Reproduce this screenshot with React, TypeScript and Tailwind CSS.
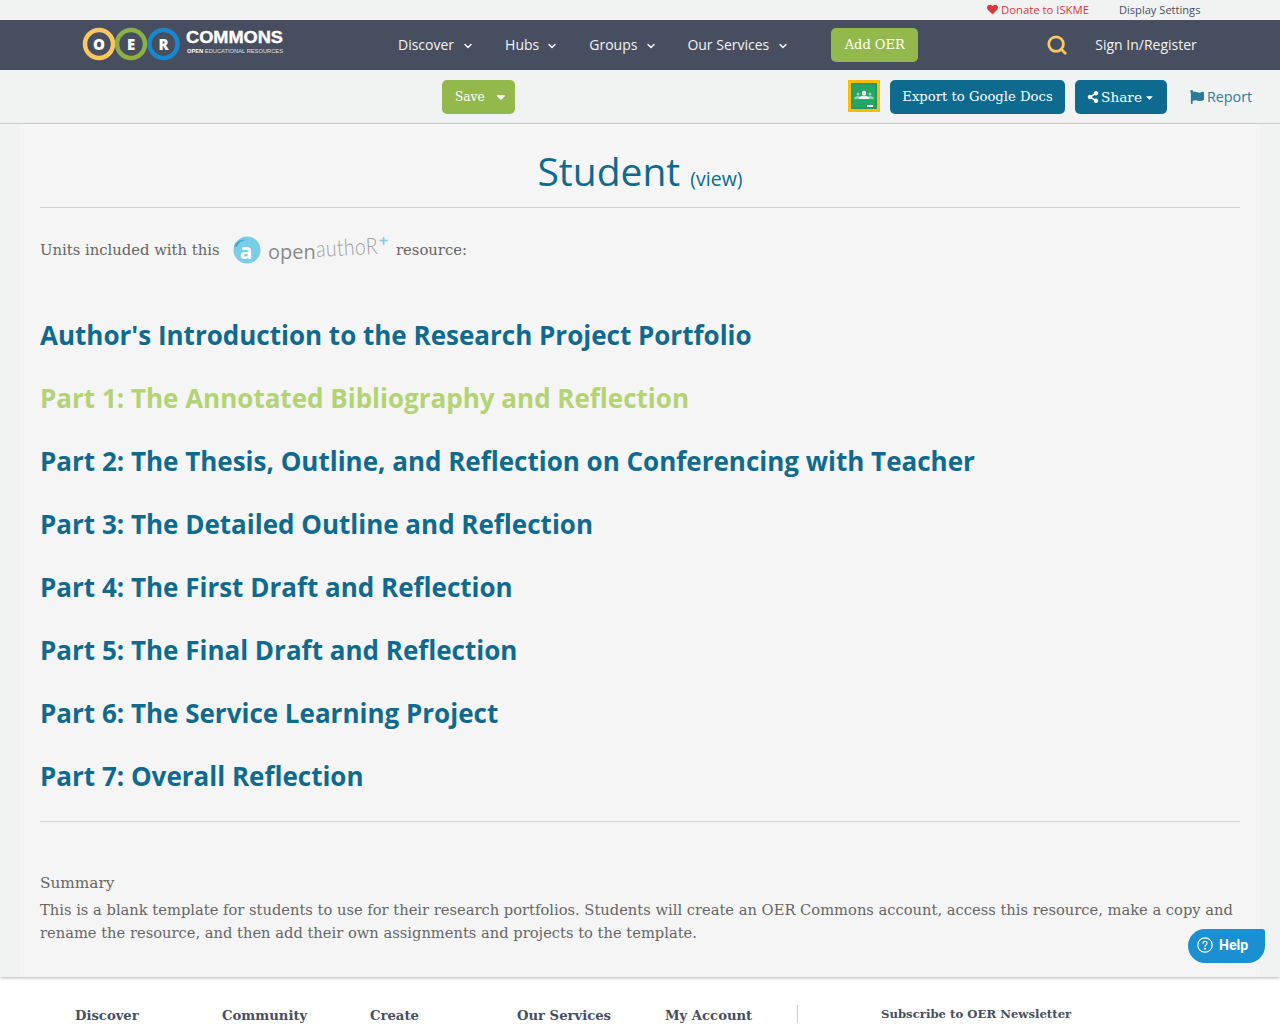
import React from "react";
import { ChevronDown, Search } from "lucide-react";
import { FaHeart, FaFlag, FaShareAlt, FaCaretDown } from "react-icons/fa";

const sans = "font-['Open_Sans',sans-serif]";
const slab = "font-['DejaVu_Serif',serif]";

const navItems = [
  { label: "Discover", chev: "ml-[8px]", gap: "mr-[31px]" },
  { label: "Hubs", chev: "ml-[7px]", gap: "mr-[31px]" },
  { label: "Groups", chev: "ml-[8px]", gap: "mr-[30px]" },
  { label: "Our Services", chev: "ml-[8px]", gap: "mr-[42px]" },
];

const units = [
  "Author's Introduction to the Research Project Portfolio",
  "Part 1: The Annotated Bibliography and Reflection",
  "Part 2: The Thesis, Outline, and Reflection on Conferencing with Teacher",
  "Part 3: The Detailed Outline and Reflection",
  "Part 4: The First Draft and Reflection",
  "Part 5: The Final Draft and Reflection",
  "Part 6: The Service Learning Project",
  "Part 7: Overall Reflection",
];

function Logo() {
  const ring = (cx: number, color: string, letter: string) => (
    <g>
      <circle cx={cx} cy="18" r="14" fill="#474e60" stroke={color} strokeWidth="4.5" />
      <text x={cx} y="23.5" textAnchor="middle" fontSize="15" fontWeight="800" fill="#fff" fontFamily="'Open Sans', sans-serif">
        {letter}
      </text>
    </g>
  );
  return (
    <svg width="204" height="36" viewBox="0 0 204 36">
      {ring(17, "#fcc75f", "O")}
      {ring(49, "#8cb044", "E")}
      {ring(81.5, "#1a86cc", "R")}
      <text x="104" y="17" fontSize="17" fontWeight="800" fill="#fff" fontFamily="'Liberation Sans', sans-serif" stroke="#fff" strokeWidth="0.4" textLength="97" lengthAdjust="spacingAndGlyphs">
        COMMONS
      </text>
      <text x="105" y="27" fontSize="5.8" fill="#dfe1e6" fontFamily="'Liberation Sans', sans-serif" textLength="96" lengthAdjust="spacingAndGlyphs">
        <tspan fontWeight="700" fill="#ffffff">OPEN</tspan> EDUCATIONAL RESOURCES
      </text>
    </svg>
  );
}

function ClassroomIcon() {
  return (
    <div className="w-8 h-8 -mt-px border-[3px] border-[#fcbc05] bg-[#25a667] shrink-0">
      <svg width="26" height="26" viewBox="0 0 26 26">
        <rect x="1" y="1" width="24" height="24" fill="#25a667" stroke="#1e8e57" strokeWidth="1" />
        <circle cx="7" cy="11" r="1.5" fill="#8fd3b0" />
        <circle cx="19" cy="11" r="1.5" fill="#8fd3b0" />
        <path d="M3 16c0-2 2-3 4-3s4 1 4 3zM15 16c0-2 2-3 4-3s4 1 4 3z" fill="#8fd3b0" />
        <circle cx="13" cy="10" r="2.2" fill="#fff" />
        <path d="M8 16c0-2.4 2.4-3.6 5-3.6s5 1.2 5 3.6z" fill="#fff" />
        <rect x="16" y="22" width="6" height="2" fill="#fff" />
      </svg>
    </div>
  );
}

function OpenAuthorLogo() {
  return (
    <div className="flex items-center w-[152px] h-[30px] relative">
      <svg width="30" height="30" viewBox="0 0 30 30" className="shrink-0">
        <circle cx="15" cy="15" r="13.5" fill="#79cde6" />
        <path d="M2 11c3-5 7-7 12-6-5 1-8 3-9 7z" fill="#3fa9cf" />
        <text x="14" y="24" textAnchor="middle" fontSize="21" fontWeight="700" fill="#fff" fontFamily="'Open Sans', sans-serif">
          a
        </text>
      </svg>
      <span className={`${sans} text-[20px] leading-none text-[#8a8a8a] ml-[6px] mt-[3px]`}>open</span>
      <span className="font-['Lato',sans-serif] font-light text-[23px] leading-none tracking-[0.5px] text-[#a0a0a0] -mt-[3px] -rotate-3 origin-left scale-x-[0.84]">
        authoR
      </span>
      <span className="absolute left-[146px] top-[-1px] text-[13px] leading-none font-bold text-[#79cde6]">+</span>
    </div>
  );
}

export default function App() {
  return (
    <div className={`${sans} h-screen overflow-hidden relative bg-white`}>
      {/* utility strip */}
      <div className="h-5 bg-[#f1f3f2] flex items-center leading-none pb-[1px]">
        <a className="ml-[987px] flex items-center gap-[3px] text-[#d9363e] text-[11.3px]">
          <FaHeart className="text-[11px]" />
          Donate to ISKME
        </a>
        <a className="ml-[30px] text-[#474e60] text-[11.1px]">Display Settings</a>
      </div>

      {/* main nav */}
      <nav className="h-[50px] bg-[#474e60] flex items-center text-white pb-[1px]">
        <div className="ml-[82px] w-[204px] -mt-[2px] mr-[112px] flex">
          <Logo />
        </div>
        {navItems.map((n) => (
          <a key={n.label} className={`flex items-center text-[14px] text-[#f2f3f5] ${n.gap}`}>
            {n.label}
            <ChevronDown size={12} strokeWidth={3} className={`${n.chev} mt-[2px]`} />
          </a>
        ))}
        <a className={`${slab} w-[87px] h-[34px] rounded-[5px] bg-[#93b94c] text-[13px] pt-[1px] flex items-center justify-center`}>
          Add OER
        </a>
        <Search size={22} strokeWidth={3} className="ml-[128px] text-[#fcc75f]" />
        <a className="ml-[27px] text-[14px] text-[#f2f3f5]">Sign In/Register</a>
      </nav>

      {/* toolbar */}
      <div className="h-[54px] bg-[#f1f3f2] border-b border-[#d6d6d6] flex items-center">
        <button className={`${slab} ml-[442px] w-[73px] h-[34px] rounded-[5px] bg-[#93b94c] text-white text-[12.2px] pt-[1px] pl-[13px] flex items-center justify-start gap-[9px]`}>
          Save
          <FaCaretDown className="text-[14px]" />
        </button>
        <div className="ml-[333px]">
          <ClassroomIcon />
        </div>
        <button className={`${slab} ml-[10px] w-[175px] h-[34px] rounded-[5px] bg-[#0e6a8e] text-white text-[13.2px] flex items-center justify-center`}>
          Export to Google Docs
        </button>
        <button className={`${slab} ml-[10px] w-[92px] h-[34px] rounded-[5px] bg-[#0e6a8e] text-white text-[13.7px] pt-[1px] flex items-center justify-center gap-[2px]`}>
          <FaShareAlt className="text-[12px]" />
          Share
          <FaCaretDown className="text-[11px]" />
        </button>
        <a className="ml-[23px] flex items-center gap-[3px] text-[14.3px] text-[#2a7c9c]">
          <FaFlag className="text-[14px]" />
          Report
        </a>
      </div>

      {/* content */}
      <main className="h-[853px] bg-[#f1f3f2] px-5 shadow-[0_1px_3px_rgba(0,0,0,0.3)] relative">
        <div className="h-full bg-[#f5f5f5] px-5 pt-[17px]">
          <div className="h-[67px] border-b border-[#d2d4d4] flex items-baseline justify-center text-[#0e6a8e]">
            <h1 className="text-[39px] leading-[60px]">Student</h1>
            <a className="text-[19.5px] ml-[10px]">(view)</a>
          </div>

          <div className={`${slab} mt-[27px] h-[30px] flex items-center text-[14.8px] text-[#666666]`}>
            <span className="w-[192px]">Units included with this</span>
            <OpenAuthorLogo />
            <span className="ml-[12px]">resource:</span>
          </div>

          <div className="mt-[39px] pb-[13px] border-b border-[#d2d4d4] flex flex-col">
            {units.map((u, i) => (
              <a key={u} className={`h-[63px] flex items-center text-[26px] font-bold ${i === 1 ? "text-[#b3d374]" : "text-[#0e6a8e]"}`}>
                {u}
              </a>
            ))}
          </div>

          <div className={`${slab} text-[14.7px] text-[#666666] leading-[23px] mt-[50px]`}>
            <p className="text-[15.3px]">Summary</p>
            <p className="mt-[3px] max-w-[1200px]">
              This is a blank template for students to use for their research portfolios. Students will create an OER Commons account, access this resource, make a copy and rename the resource, and then add their own assignments and projects to the template.
            </p>
          </div>
        </div>
      </main>

      {/* footer */}
      <footer className={`${slab} h-[47px] flex font-bold text-[13.2px] text-[#474e60] pt-[29px]`}>
        <div className="ml-[75px] w-[147px]">Discover</div>
        <div className="w-[148px]">Community</div>
        <div className="w-[147px]">Create</div>
        <div className="w-[148px]">Our Services</div>
        <div className="w-[132px]">My Account</div>
        <div className="w-px h-[18px] bg-[#cccccc] mr-[83px] -mt-px" />
        <div className="text-[11.7px]">Subscribe to OER Newsletter</div>
      </footer>

      {/* help */}
      <button className="absolute left-[1188px] top-[929px] w-[77px] h-[34px] bg-[#1a8fd1] text-white rounded-tl-[17px] rounded-br-[17px] rounded-bl-[17px] rounded-tr-[3px] flex items-center justify-start pl-[9px] pb-[2px] gap-[6px] font-['Roboto',sans-serif] font-bold text-[14px]">
        <svg width="16" height="16" viewBox="0 0 16 16" fill="none" stroke="#fff" strokeWidth="1.2">
          <circle cx="8" cy="8" r="7.2" />
          <path d="M6 6.3a2 2 0 1 1 3 1.7c-.7.4-1 .8-1 1.6" strokeLinecap="round" />
          <circle cx="8" cy="11.8" r="0.4" fill="#fff" />
        </svg>
        Help
      </button>
    </div>
  );
}
